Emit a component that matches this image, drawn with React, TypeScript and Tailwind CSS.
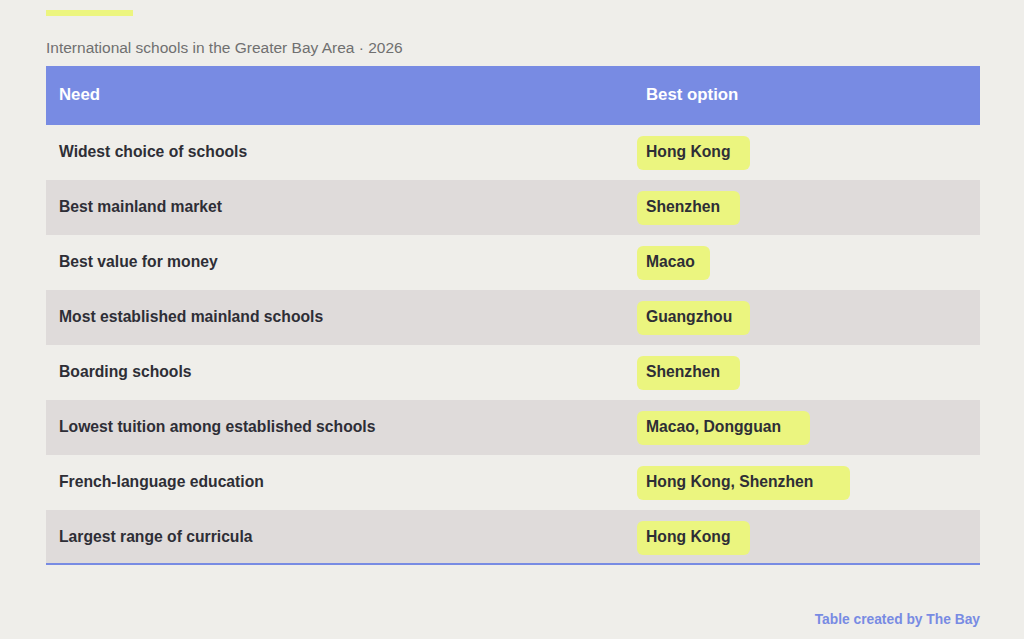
import React from "react";

// pill widths follow the original design, which snapped them to fixed steps
const rows: { need: string; best: string; w: string }[] = [
  { need: "Widest choice of schools", best: "Hong Kong", w: "w-[113px]" },
  { need: "Best mainland market", best: "Shenzhen", w: "w-[103px]" },
  { need: "Best value for money", best: "Macao", w: "w-[73px]" },
  { need: "Most established mainland schools", best: "Guangzhou", w: "w-[113px]" },
  { need: "Boarding schools", best: "Shenzhen", w: "w-[103px]" },
  { need: "Lowest tuition among established schools", best: "Macao, Dongguan", w: "w-[173px]" },
  { need: "French-language education", best: "Hong Kong, Shenzhen", w: "w-[213px]" },
  { need: "Largest range of curricula", best: "Hong Kong", w: "w-[113px]" },
];

const App = () => {
  return (
    <div
      className="w-[1024px] h-[639px] bg-[#efeeea] px-[46px] pt-[10px] flex flex-col"
      style={{ fontFamily: '"Liberation Sans", Arial, sans-serif' }}
    >
      <div className="w-[87px] h-[6px] bg-[#ecf57f]" />
      <div className="mt-[22px] text-[15.5px] leading-[20px] text-[#707070]">
        International schools in the Greater Bay Area · 2026
      </div>
      <div className="mt-[8px] w-[934px]">
        <div className="grid grid-cols-[587px_1fr] h-[59px] items-center bg-[#788be3] text-white font-bold text-[16.8px] pb-[2px]">
          <div className="px-[13px]">Need</div>
          <div className="px-[13px]">Best option</div>
        </div>
        {rows.map((r, i) => (
          <div
            key={r.need}
            className={
              "grid grid-cols-[587px_1fr] h-[55px] items-center " +
              (i % 2 === 1 ? "bg-[#dfdbda]" : "bg-[#efeeea]")
            }
          >
            <div className="px-[13px] text-[15.7px] font-bold text-[#2e2e36] pb-[2px]">{r.need}</div>
            <div className="pl-[4px]">
              <span
                className={
                  "inline-flex items-center h-[34px] rounded-[6px] bg-[#ebf57f] pl-[9px] pb-[1px] text-[15.7px] font-bold text-[#2e2e36] whitespace-nowrap " +
                  r.w
                }
              >
                {r.best}
              </span>
            </div>
          </div>
        ))}
        <div className="relative -mt-[2px] h-[2px] bg-[#788be3]" />
      </div>
      <div className="mt-auto mb-[8px] w-[934px] text-right text-[13.8px] font-bold text-[#788be3]">
        Table created by The Bay
      </div>
    </div>
  );
};

export default App;
